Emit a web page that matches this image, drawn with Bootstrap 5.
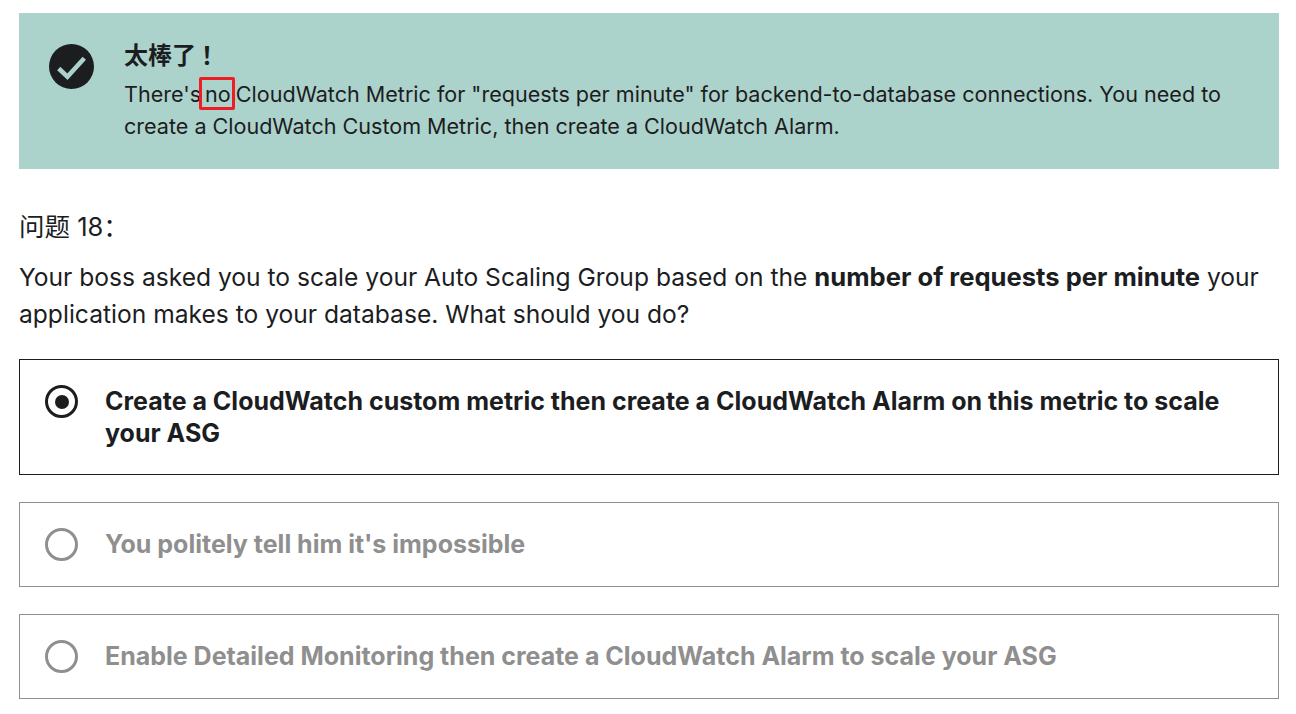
<!DOCTYPE html>
<html lang="zh">
<head>
  <meta charset="UTF-8">
  <title>Quiz</title>
  <link href="https://cdn.jsdelivr.net/npm/bootstrap@5.3.0/dist/css/bootstrap.min.css" rel="stylesheet">
  <style>
    body { font-family: Inter, "Noto Sans CJK SC", sans-serif; color: #1c1d1f; background: #fff; overflow: hidden; }
    .page-wrap { padding: 13px 17px 0 19px; }
    .result-box { background: #acd2cc; padding: 27px 30px 0 30px; height: 156px; gap: 30px; }
    .check-icon { width: 45px; height: 45px; margin-top: 4px; flex: none; }
    .result-title { font-family: Inter, "Noto Sans CJK TC", sans-serif; font-size: 24px; font-weight: 700; line-height: 32px; margin-bottom: 6px; }
    .bang { margin-left: 5px; }
    .result-text { font-size: 21.55px; line-height: 32px; }
    .no-mark { position: relative; margin: 0 -1px 0 -2px; }
    .no-mark::after { content: ""; position: absolute; left: -6px; right: -4px; top: -4px; bottom: -3px; border: 3px solid #ee1c25; border-radius: 2px; }
    .q-num { font-size: 25.5px; line-height: 32px; margin-top: 42px; }
    .q-text { font-size: 24.6px; line-height: 37px; margin-top: 16px; margin-bottom: 26px; }
    .q-text b { font-size: 25.6px; line-height: 1; }
    .answer { border: 1px solid #1c1d1f; padding: 25px; gap: 27px; margin-bottom: 27px; font-size: 25px; line-height: 32px; font-weight: 700; align-items: flex-start; }
    .answer.off { border-color: #8f8f8f; color: #8f8f8f; }
    .radio-dot { width: 33px; height: 33px; border: 3px solid #1c1d1f; border-radius: 50%; flex: none; display: flex; align-items: center; justify-content: center; }
    .radio-dot span { width: 14px; height: 14px; border-radius: 50%; background: #1c1d1f; }
    .off .radio-dot { border-color: #8f8f8f; }
  </style>
</head>
<body>
  <div class="page-wrap">
    <div class="result-box d-flex">
      <svg class="check-icon" viewBox="0 0 44 44">
        <circle cx="22" cy="22" r="22" fill="#1c1d1f"/>
        <path d="M9.5 24l8.5 8 16.5-18" fill="none" stroke="#acd2cc" stroke-width="4.5"/>
      </svg>
      <div>
        <div class="result-title">太棒了<span class="bang">！</span></div>
        <div class="result-text">There's <span class="no-mark">no</span> CloudWatch Metric for "requests per minute" for backend-to-database connections. You need to create a CloudWatch Custom Metric, then create a CloudWatch Alarm.</div>
      </div>
    </div>
    <div class="q-num">问题 18：</div>
    <div class="q-text">Your boss asked you to scale your Auto Scaling Group based on the <b>number of requests per minute</b> your application makes to your database. What should you do?</div>
    <div class="answer d-flex">
      <div class="radio-dot"><span></span></div>
      <div>Create a CloudWatch custom metric then create a CloudWatch Alarm on this metric to scale your ASG</div>
    </div>
    <div class="answer off d-flex">
      <div class="radio-dot"></div>
      <div>You politely tell him it's impossible</div>
    </div>
    <div class="answer off d-flex">
      <div class="radio-dot"></div>
      <div>Enable Detailed Monitoring then create a CloudWatch Alarm to scale your ASG</div>
    </div>
  </div>
  <script src="https://cdn.jsdelivr.net/npm/bootstrap@5.3.0/dist/js/bootstrap.bundle.min.js"></script>
</body>
</html>
